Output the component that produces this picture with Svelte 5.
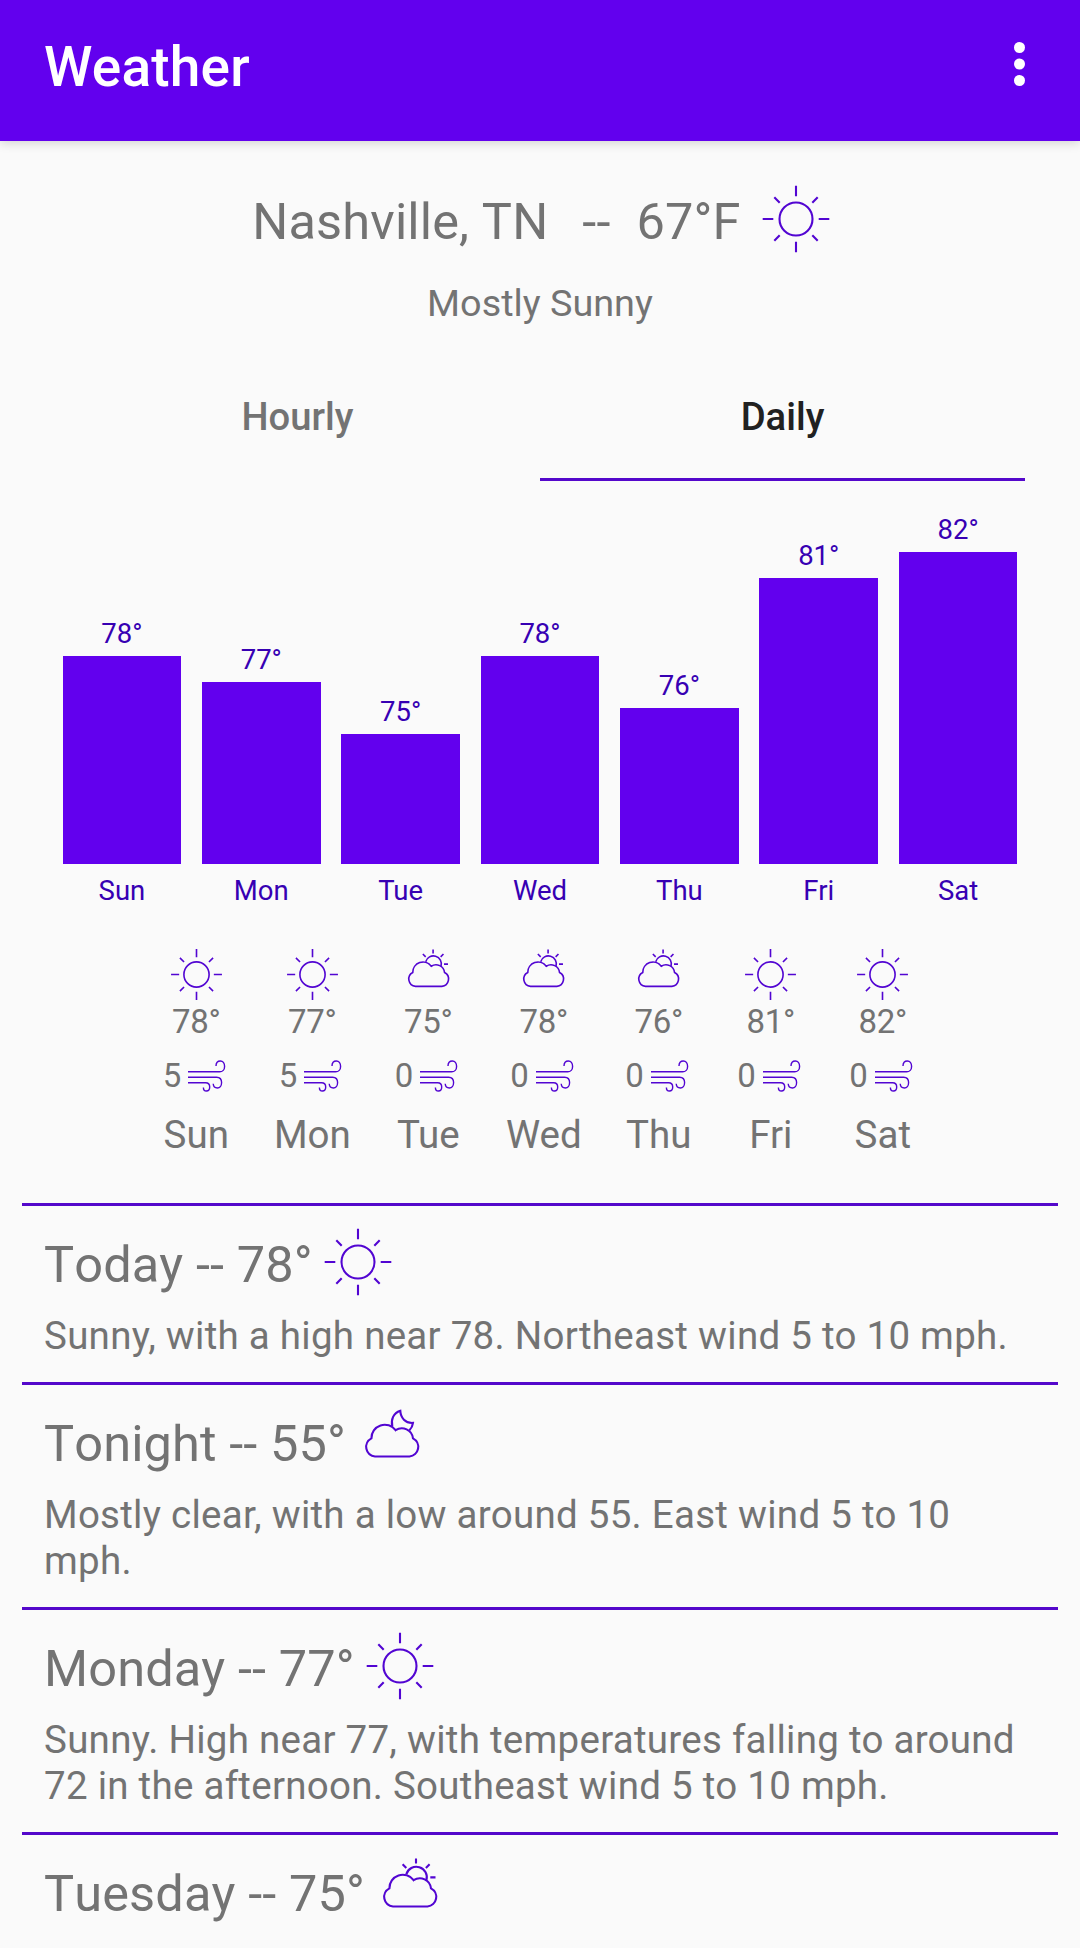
<!--
  Weather screen
  Current conditions, daily temperature chart and text forecast
-->

<script lang="ts">
  type Icon = 'sun' | 'partly' | 'night';

  interface Day {
    name: string;
    temp: number;
    wind: number;
    icon: Icon;
  }

  interface Period {
    name: string;
    temp: number;
    icon: Icon;
    detail?: string;
  }

  const days: Day[] = [
    { name: 'Sun', temp: 78, wind: 5, icon: 'sun' },
    { name: 'Mon', temp: 77, wind: 5, icon: 'sun' },
    { name: 'Tue', temp: 75, wind: 0, icon: 'partly' },
    { name: 'Wed', temp: 78, wind: 0, icon: 'partly' },
    { name: 'Thu', temp: 76, wind: 0, icon: 'partly' },
    { name: 'Fri', temp: 81, wind: 0, icon: 'sun' },
    { name: 'Sat', temp: 82, wind: 0, icon: 'sun' }
  ];

  const periods: Period[] = [
    {
      name: 'Today',
      temp: 78,
      icon: 'sun',
      detail: 'Sunny, with a high near 78. Northeast wind 5 to 10 mph.'
    },
    {
      name: 'Tonight',
      temp: 55,
      icon: 'night',
      detail: 'Mostly clear, with a low around 55. East wind 5 to 10 mph.'
    },
    {
      name: 'Monday',
      temp: 77,
      icon: 'sun',
      detail: 'Sunny. High near 77, with temperatures falling to around 72 in the afternoon. Southeast wind 5 to 10 mph.'
    },
    { name: 'Tuesday', temp: 75, icon: 'partly' }
  ];

  const tabs = ['Hourly', 'Daily'];
  let activeTab = $state('Daily');

  /** Chart scale: the axis starts at 70 degrees */
  const chartBase = 70;
  const degreeHeight = 26.03;

  function barHeight(temp: number) {
    return (temp - chartBase) * degreeHeight;
  }
</script>

{#snippet weatherIcon(icon: Icon)}
  <svg class="icon" viewBox="0 0 72 72" aria-hidden="true">
    {#if icon === 'sun'}
      <circle cx="36" cy="36" r="16.5" />
      <path d="M36 2.7v10.6M36 58.7v10.6M2.7 36h10.6M58.7 36h10.6" />
      <path d="M14.3 14.3l5.4 5.4M52.3 52.3l5.4 5.4M57.7 14.3l-5.4 5.4M19.7 52.3l-5.4 5.4" />
    {:else}
      <path
        d="M19 51.5A9.6 9.6 0 0 1 15.4 33.4A13.4 13.4 0 0 1 39.6 25.2A11.2 11.2 0 0 1 57 33.4A9.6 9.6 0 0 1 53.5 51.5Z"
      />
      {#if icon === 'partly'}
        <path d="M32.3 19.2A10.4 10.4 0 0 1 52.4 25.2" />
        <path d="M42 3.4v5.2M28.6 9.2l3.7 3.7M55.6 9.2l-3.7 3.7M56.3 22.4h5.2" />
      {:else}
        <path d="M36.3 21.6C34.6 14.6 37.4 8 44.3 5.8C44.6 12.8 49.4 18.4 57 17.9C56.6 21 55.4 23.4 53.4 25.2" />
      {/if}
    {/if}
  </svg>
{/snippet}

<div class="screen">
  <header class="app-bar">
    <h1 class="app-bar__title">Weather</h1>
    <button class="app-bar__menu" type="button" aria-label="More options">
      <svg viewBox="0 0 11 44" aria-hidden="true">
        <circle cx="5.5" cy="5.5" r="5.5" />
        <circle cx="5.5" cy="22" r="5.5" />
        <circle cx="5.5" cy="38.5" r="5.5" />
      </svg>
    </button>
  </header>

  <section class="current">
    <div class="current__row">
      <span>Nashville, TN</span>
      <span class="current__dash">--</span>
      <span>67°F</span>
      {@render weatherIcon('sun')}
    </div>
    <p class="current__summary">Mostly Sunny</p>
  </section>

  <nav class="tabs">
    {#each tabs as tab}
      <button
        type="button"
        class="tab"
        class:tab--active={tab === activeTab}
        onclick={() => (activeTab = tab)}
      >
        {tab}
      </button>
    {/each}
  </nav>

  <section class="chart">
    {#each days as day}
      <div class="chart__col">
        <span class="chart__value">{day.temp}°</span>
        <div class="chart__bar" style="height: {barHeight(day.temp)}px"></div>
        <span class="chart__label">{day.name}</span>
      </div>
    {/each}
  </section>

  <section class="days">
    {#each days as day}
      <div class="day">
        {@render weatherIcon(day.icon)}
        <span class="day__temp">{day.temp}°</span>
        <div class="day__wind">
          <span>{day.wind}</span>
          <svg viewBox="0 0 38 32" aria-hidden="true">
            <path d="M0 11.8H31.6C34.6 11.8 36.6 9.4 36.6 6.4C36.6 3.2 34.8 1 32.4 1C29.8 1 28 3 28 6" />
            <path d="M0 17.2H28.6C31.6 17.2 33.6 19.4 33.6 22.6C33.6 25.8 31.8 28 29.4 28C27 28 25.4 26.4 25.2 23.8" />
            <path d="M0 22.8H17.6C20 22.8 21.7 24.4 21.7 27C21.7 29.4 20.4 31 18.4 31C16.6 31 15.4 29.6 15.4 27.4" />
          </svg>
        </div>
        <span class="day__name">{day.name}</span>
      </div>
    {/each}
  </section>

  <section class="forecast">
    {#each periods as period}
      <article class="period">
        <div class="period__head">
          <span>{period.name} -- {period.temp}°</span>
          {@render weatherIcon(period.icon)}
        </div>
        {#if period.detail}
          <p class="period__detail">{period.detail}</p>
        {/if}
      </article>
    {/each}
  </section>
</div>

<style>
  :global(body) {
    background: #fafafa;
  }

  .screen {
    --primary: #6200ee;
    --primary-dark: #3700b3;
    --line: #5408cb;
    --text: #737373;

    height: 1948px;
    overflow: hidden;
    background: #fafafa;
    color: var(--text);
    font-family: Roboto, 'Liberation Sans', sans-serif;
    font-size: 38.5px;
    line-height: 46px;
  }

  button {
    padding: 0;
    border: none;
    background: none;
    font: inherit;
    color: inherit;
    cursor: pointer;
  }

  p,
  h1 {
    margin: 0;
  }

  .icon {
    flex: none;
    width: 72px;
    height: 72px;
    fill: none;
    stroke: #5205d2;
    stroke-width: 2.1;
  }

  /* App bar */
  .app-bar {
    display: flex;
    align-items: flex-start;
    justify-content: space-between;
    height: 140.6px;
    padding: 0 55.5px 0 44px;
    box-sizing: border-box;
    background: var(--primary);
    box-shadow: 0 2px 10px rgba(0, 0, 0, 0.16);
    color: #fff;
  }

  .app-bar__title {
    font-size: 55px;
    font-weight: 500;
    line-height: 134px;
    letter-spacing: 0.2px;
  }

  .app-bar__menu {
    margin-top: 42px;
    height: 44px;
  }

  .app-bar__menu svg {
    display: block;
    width: 11px;
    height: 44px;
    fill: #fff;
  }

  /* Current conditions */
  .current {
    padding-top: 42.4px;
    text-align: center;
  }

  .current__row {
    display: flex;
    justify-content: center;
    height: 72px;
    padding-left: 4px;
    font-size: 50.5px;
    font-kerning: none;
    line-height: 78px;
    letter-spacing: 0.15px;
  }

  .current__dash {
    margin: 0 26px 0 34px;
  }

  .current__row .icon {
    margin-left: 19px;
  }

  .current__summary {
    margin-top: 25px;
    font-size: 37.8px;
  }

  /* Tabs */
  .tabs {
    display: grid;
    grid-template-columns: 1fr 1fr;
    margin: 30px 55px 0;
  }

  .tab {
    height: 125px;
    border-bottom: 3px solid transparent;
    font-size: 38.2px;
    font-weight: 500;
    text-align: center;
  }

  .tab--active {
    border-color: var(--line);
    color: #212121;
  }

  /* Temperature chart */
  .chart {
    display: flex;
    align-items: flex-end;
    gap: 20.9px;
    height: 427px;
    margin: 0 62.7px;
    color: var(--primary-dark);
    font-size: 27.5px;
    line-height: 34px;
  }

  .chart__col {
    display: flex;
    flex: 1;
    flex-direction: column;
    text-align: center;
  }

  .chart__value {
    margin-bottom: 4.5px;
  }

  .chart__bar {
    background: var(--primary);
  }

  .chart__label {
    margin-top: 10px;
  }

  /* Day summary */
  .days {
    display: grid;
    grid-template-columns: 113px 119px 113px 118px 112px 112px 112px;
    justify-content: center;
    margin: 39px 1.4px 0 0;
  }

  .day {
    display: flex;
    flex-direction: column;
    align-items: center;
  }

  .day .icon {
    width: 55px;
    height: 55px;
  }

  .day__temp,
  .day__wind {
    font-size: 33px;
    line-height: 40px;
  }

  .day__temp {
    margin-top: 0.5px;
    letter-spacing: -0.3px;
  }

  .day__wind {
    display: flex;
    align-items: center;
    gap: 7px;
    margin-top: 14px;
    padding-right: 3.5px;
  }

  .day__wind svg {
    width: 38px;
    height: 32px;
    fill: none;
    stroke: #5205d2;
    stroke-width: 1.4;
  }

  .day__name {
    margin-top: 15.5px;
  }

  /* Text forecast */
  .forecast {
    margin: 45px 22px 0;
  }

  .period {
    padding: 20px 22px 23px;
    border-top: 3px solid var(--line);
  }

  .period__head {
    display: flex;
    height: 72px;
    font-size: 50.5px;
    font-kerning: none;
    line-height: 78px;
    letter-spacing: 0.12px;
  }

  .period__head .icon {
    margin-left: 9.5px;
  }

  .period__detail {
    margin-top: 15px;
    letter-spacing: 0.27px;
  }
</style>
